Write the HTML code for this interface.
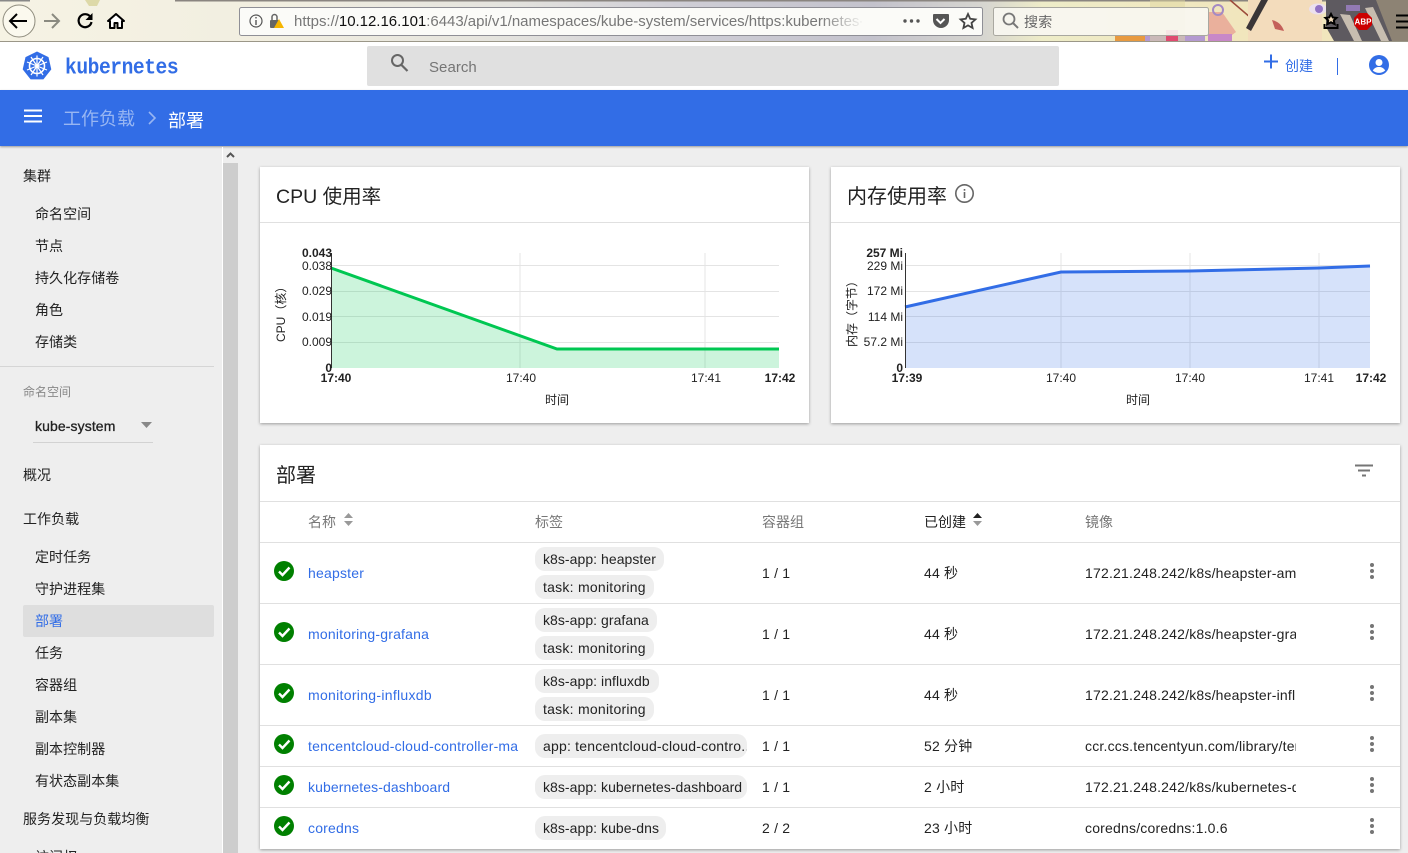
<!DOCTYPE html>
<html><head><meta charset="utf-8">
<style>
html,body{margin:0;padding:0;width:1408px;height:853px;overflow:hidden;background:#eeeeee;font-family:"Liberation Sans","Noto Sans CJK SC",sans-serif;font-size:14px;color:#222}
#root{position:relative;width:1408px;height:853px;overflow:hidden;letter-spacing:.2px}
.a{position:absolute;white-space:nowrap}
.t{position:absolute;white-space:nowrap;line-height:20px}
.card{position:absolute;background:#fff;box-shadow:0 1px 3px rgba(0,0,0,.35)}
.hl{position:absolute;height:1px;background:#e0e0e0}
.chip{position:absolute;background:#eee;border-radius:10px;height:24px;line-height:24px;padding:0 8px;color:#222;white-space:nowrap;overflow:hidden;box-sizing:border-box;letter-spacing:.05px}
.task{letter-spacing:.25px}
.lnk{color:#326de6}
.side{color:#222;letter-spacing:.05px}
.th{color:#777}
</style></head><body><div id="root">

<!-- browser chrome -->
<svg class="a" style="left:0;top:0" width="1408" height="42" viewBox="0 0 1408 42">
<defs><linearGradient id="bg" x1="0" x2="1" y1="0" y2="0">
<stop offset="0" stop-color="#f6f3e4"/><stop offset=".2" stop-color="#f1eee0"/><stop offset=".36" stop-color="#e4e3de"/><stop offset=".48" stop-color="#cfced6"/><stop offset=".62" stop-color="#c3c2cc"/><stop offset=".7" stop-color="#d7d6d0"/><stop offset=".74" stop-color="#eeecc8"/><stop offset=".88" stop-color="#f1e6bd"/><stop offset="1" stop-color="#f1e6bd"/></linearGradient></defs>
<rect width="1408" height="41" fill="url(#bg)"/>
<rect width="30" height="1.500" fill="#888"/><rect x="175" width="1233" height="1.500" fill="#8a8580"/>
<path d="M85 0h15l-3 6h-8z" fill="#ddd9a8"/>
<!-- centre-right art behind search box -->
<rect x="1130" y="36" width="75" height="5" fill="#b49ad0"/>
<rect x="1150" y="0" width="35" height="41" fill="#e0d8a0" opacity=".5"/>
<rect x="1166" y="30" width="12" height="11" fill="#e04a70"/>
<rect x="1115" y="36" width="30" height="5" fill="#e89a40"/>
<!-- flower/red at 1210-1240 -->
<path d="M1208 12h14l14 20-12 9h-16z" fill="#eab09c"/>
<circle cx="1218" cy="10" r="5" fill="none" stroke="#a48ac4" stroke-width="2"/>
<rect x="1208" y="34" width="24" height="7" fill="#c888c8"/>
<path d="M1230 0l28 24" stroke="#9c4a3a" stroke-width="1.500"/>
<!-- face and hair -->
<path d="M1248 0h74v41h-74z" fill="#f3dcbc"/>
<path d="M1268 0h-7l-15 28 5 3z" fill="#3a3638"/>
<path d="M1272 20q9 2 12 11l-9-2z" fill="#c4605a"/>
<ellipse cx="1318" cy="9" rx="9" ry="5.500" fill="#ece0ee"/><circle cx="1319" cy="9" r="4" fill="#9272c4"/>
<path d="M1326 0h82v41h-74l-8-14z" fill="#5e5a60"/>
<path d="M1340 14l14 27h8l-12-26zM1365 8l16 33h8l-16-34z" fill="#c7bdb0"/>
<path d="M1376 0h32v41h-16z" fill="#8d8374"/>
<rect x="1346" y="5" width="14" height="6" fill="#a888d8" opacity=".7"/>
<rect y="41" width="1408" height="1" fill="#9b9788"/>
<rect x="239.500" y="7.500" width="743" height="28" rx="2" fill="#fbfbf8" stroke="#8f8f96"/>
<rect x="993.500" y="7.500" width="215" height="28" rx="2" fill="#f8f7f2" fill-opacity=".9" stroke="#a9a8a0"/>
<circle cx="19" cy="21" r="16" fill="#fbf9ee" stroke="#8e8b7d"/>
<path d="M27 21H11M17 14l-7 7 7 7" fill="none" stroke="#000" stroke-width="2"/>
<path d="M59 21H44M52 14l7 7-7 7" fill="none" stroke="#8a8a80" stroke-width="2"/>
<path d="M90.500 17a6.500 6.500 0 1 0 1 5" fill="none" stroke="#000" stroke-width="2.200"/><path d="M92.500 13v7h-7z" fill="#000"/>
<path d="M116 14l-8 7h2v7h4.500v-5h3v5h4.500v-7h2z" fill="#fff" stroke="#000" stroke-width="2" stroke-linejoin="round"/>
<circle cx="256" cy="21" r="6" fill="none" stroke="#555" stroke-width="1.200"/><rect x="255.300" y="20" width="1.400" height="5" fill="#555"/><rect x="255.300" y="17" width="1.400" height="1.500" fill="#555"/>
<rect x="270" y="20" width="9" height="8" rx="1" fill="#666"/><path d="M272 20v-3a2.500 2.500 0 0 1 5 0v3" fill="none" stroke="#666" stroke-width="1.500"/>
<path d="M279 19l-5 9h10z" fill="#f6b500"/>
<circle cx="905" cy="21" r="1.700" fill="#555"/><circle cx="911.500" cy="21" r="1.700" fill="#555"/><circle cx="918" cy="21" r="1.700" fill="#555"/>
<path d="M933 14h15a1 1 0 0 1 1 1v5a8 8 0 0 1-16 0v-5a1 1 0 0 1 1-1z" fill="#555"/><path d="M936.500 19l4 4 4-4" fill="none" stroke="#fff" stroke-width="2"/>
<path d="M968 14l2.200 4.800 5.200.6-3.900 3.500 1.100 5.100-4.600-2.600-4.600 2.600 1.100-5.100-3.900-3.500 5.200-.6z" fill="none" stroke="#444" stroke-width="1.800"/>
<circle cx="1009" cy="19" r="5.500" fill="none" stroke="#777" stroke-width="1.800"/><path d="M1013 23l5 5" stroke="#777" stroke-width="2"/>
<path d="M1331 14l1.800 3.500 3.700.4-2.700 2.500.8 3.700-3.600-1.800-3.600 1.800.8-3.700-2.700-2.500 3.700-.4z" fill="#f3dcbc" stroke="#000" stroke-width="2"/><path d="M1324.500 24v4h13v-4" fill="none" stroke="#000" stroke-width="2"/>
<path d="M1359 13h8l5 5v7l-5 5h-8l-5-5v-7z" fill="#c00"/>
<text x="1363" y="24.500" font-family="Liberation Sans" font-size="8" font-weight="700" fill="#fff" text-anchor="middle" letter-spacing="0">ABP</text>
<path d="M1396 15.500h12M1396 21.500h12M1396 27.500h12" stroke="#000" stroke-width="2"/>
</svg>
<div class="t" style="left:294px;top:12px;width:568px;overflow:hidden;font-size:15px;letter-spacing:-.02px;color:#777">https://<span style="color:#111">10.12.16.101</span>:6443/api/v1/namespaces/kube-system/services/https:kubernetes-</div>
<div class="a" style="left:820px;top:9px;width:50px;height:25px;background:linear-gradient(90deg,rgba(251,251,248,0),#fbfbf8 90%)"></div>
<div class="t" style="left:1024px;top:12px;color:#666">搜索</div>

<!-- header -->
<div class="a" style="left:0;top:42px;width:1408px;height:48px;background:#fff"></div>
<svg class="a" style="left:21px;top:50px" width="32" height="32" viewBox="0 0 32 32">
<path d="M16 1.500l11.500 5.600 2.800 12.300-7.900 10H9.600l-7.900-10L4.500 7.100z" fill="#326de6"/>
<circle cx="16" cy="16" r="7.500" fill="none" stroke="#fff" stroke-width="1.600"/><circle cx="16" cy="16" r="1.800" fill="#fff"/>
<path d="M16 5.500v21M6 12l20 8M26 12L6 20M10 25l12-18M22 25L10 7" stroke="#fff" stroke-width="1.200"/>
</svg>
<div class="t" style="left:65px;top:59px;font-family:'Liberation Mono','Noto Sans CJK SC',monospace;font-weight:700;font-size:20.500px;color:#326de6;letter-spacing:-.45px;transform:scale(.955,1.1);transform-origin:left center">kubernetes</div>
<div class="a" style="left:367px;top:46px;width:692px;height:40px;background:#e0e0e0;border-radius:2px"></div>
<svg class="a" style="left:388px;top:52px" width="22" height="22" viewBox="0 0 22 22"><circle cx="9.500" cy="8.500" r="5.500" fill="none" stroke="#666" stroke-width="2"/><path d="M13.500 13l6 6" stroke="#666" stroke-width="2.200"/></svg>
<div class="t" style="left:429px;top:58px;font-size:15px;color:#757575;letter-spacing:.05px">Search</div>
<svg class="a" style="left:1262px;top:53px" width="18" height="18"><path d="M9 1.500v14M2 8.500h14" stroke="#326de6" stroke-width="2"/></svg>
<div class="t" style="left:1285px;top:56px;color:#326de6;letter-spacing:0">创建</div>
<div class="a" style="left:1337px;top:58px;width:1px;height:17px;background:#326de6"></div>
<svg class="a" style="left:1368px;top:54px" width="22" height="22" viewBox="0 0 22 22"><circle cx="11" cy="11" r="10" fill="#326de6"/><circle cx="11" cy="8.500" r="3.500" fill="#fff"/><path d="M4.800 16.500c1.500-2.600 3.800-3.500 6.200-3.500s4.700.9 6.200 3.500c-3.200 3.200-9.200 3.200-12.400 0z" fill="#fff"/></svg>

<!-- blue bar -->
<div class="a" style="left:0;top:90px;width:1408px;height:56px;background:#326de6;box-shadow:0 1px 2px rgba(0,0,0,.35)"></div>
<svg class="a" style="left:24px;top:109px" width="20" height="14"><path d="M0 1.500h18M0 7h18M0 12.500h18" stroke="#fff" stroke-width="2"/></svg>
<div class="t" style="left:63px;top:109px;font-size:18px;letter-spacing:0;color:#98b6f2">工作负载</div>
<svg class="a" style="left:146px;top:110px" width="12" height="16"><path d="M3 2l6 6-6 6" fill="none" stroke="#98b6f2" stroke-width="1.600"/></svg>
<div class="t" style="left:168px;top:111px;font-size:18px;letter-spacing:0;color:#fff">部署</div>

<!-- sidebar -->
<div class="a" style="left:222px;top:147px;width:1px;height:706px;background:#fff"></div>
<div class="a" style="left:223px;top:163px;width:15px;height:690px;background:#cdcdcd"></div>
<svg class="a" style="left:225px;top:151px" width="11" height="9"><path d="M2 6l3.500-3.500L9 6" fill="none" stroke="#555" stroke-width="2"/></svg>
<div class="a" style="left:23px;top:605px;width:191px;height:32px;background:#dedede;border-radius:2px"></div>
<div class="a" style="left:0;top:366px;width:214px;height:1px;background:#d5d5d5"></div>
<div class="a" style="left:33px;top:442px;width:120px;height:1px;background:#d2d2d2"></div>
<svg class="a" style="left:141px;top:422px" width="11" height="7"><path d="M0 0h11L5.500 6z" fill="#888"/></svg>
<div class="t side" style="left:23px;top:166px">集群</div>
<div class="t side" style="left:35px;top:204px">命名空间</div>
<div class="t side" style="left:35px;top:236px">节点</div>
<div class="t side" style="left:35px;top:268px">持久化存储卷</div>
<div class="t side" style="left:35px;top:300px">角色</div>
<div class="t side" style="left:35px;top:332px">存储类</div>
<div class="t" style="left:23px;top:382px;font-size:12px;letter-spacing:0;color:#888">命名空间</div>
<div class="t side" style="left:35px;top:416px;-webkit-text-stroke:.3px #222;letter-spacing:.1px">kube-system</div>
<div class="t side" style="left:23px;top:465px">概况</div>
<div class="t side" style="left:23px;top:509px">工作负载</div>
<div class="t side" style="left:35px;top:547px">定时任务</div>
<div class="t side" style="left:35px;top:579px">守护进程集</div>
<div class="t" style="left:35px;top:611px;color:#326de6;letter-spacing:0">部署</div>
<div class="t side" style="left:35px;top:643px">任务</div>
<div class="t side" style="left:35px;top:675px">容器组</div>
<div class="t side" style="left:35px;top:707px">副本集</div>
<div class="t side" style="left:35px;top:739px">副本控制器</div>
<div class="t side" style="left:35px;top:771px">有状态副本集</div>
<div class="t side" style="left:23px;top:809px;letter-spacing:.05px">服务发现与负载均衡</div>
<div class="t side" style="left:35px;top:847px">访问权</div>

<!-- CPU card -->
<div class="card" style="left:260px;top:167px;width:549px;height:256px"></div>
<div class="hl" style="left:260px;top:222px;width:549px"></div>
<div class="t" style="left:276px;top:187px;font-size:19.500px;letter-spacing:0;color:#222">CPU 使用率</div>
<svg class="a" style="left:260px;top:230px;letter-spacing:0" width="549" height="190" viewBox="260 230 549 190" font-family="Liberation Sans,Noto Sans CJK SC,sans-serif" font-size="12" fill="#222">
<g stroke="#e4e4e4"><path d="M331 265.500H779M331 291.500H779M331 316.500H779M331 342.500H779M520 253V368M705 253V368" fill="none"/></g>
<path d="M331 268L557 349H779V368H331z" fill="#00c752" fill-opacity=".2"/>
<path d="M331 268L557 349H779" fill="none" stroke="#00c752" stroke-width="3"/>
<path d="M331.500 253V368" stroke="#333"/>
<g text-anchor="end"><text x="332" y="257" font-weight="700">0.043</text><text x="332" y="270">0.038</text><text x="332" y="295">0.029</text><text x="332" y="321">0.019</text><text x="332" y="346">0.009</text><text x="332" y="372" font-weight="700">0</text></g>
<g text-anchor="middle"><text x="336" y="382" font-weight="700">17:40</text><text x="521" y="382">17:40</text><text x="706" y="382">17:41</text><text x="780" y="382" font-weight="700">17:42</text><text x="557" y="404">时间</text></g>
<text transform="translate(285 342) rotate(-90)">CPU（核）</text>
</svg>

<!-- Memory card -->
<div class="card" style="left:831px;top:167px;width:569px;height:256px"></div>
<div class="hl" style="left:831px;top:222px;width:569px"></div>
<div class="t" style="left:847px;top:187px;font-size:20px;letter-spacing:0;color:#222">内存使用率</div>
<svg class="a" style="left:954px;top:183px" width="21" height="21"><circle cx="10.500" cy="10.500" r="8.700" fill="none" stroke="#666" stroke-width="1.600"/><rect x="9.700" y="9" width="1.600" height="6" fill="#666"/><rect x="9.700" y="6" width="1.600" height="1.700" fill="#666"/></svg>
<svg class="a" style="left:831px;top:230px;letter-spacing:0" width="569" height="190" viewBox="831 230 569 190" font-family="Liberation Sans,Noto Sans CJK SC,sans-serif" font-size="12" fill="#222">
<g stroke="#e4e4e4"><path d="M905 265.500H1370M905 291.500H1370M905 316.500H1370M905 342.500H1370M1061 253V368M1190 253V368M1319 253V368" fill="none"/></g>
<path d="M905 307L1061 272L1190 271L1319 268L1370 266V368H905z" fill="#326de6" fill-opacity=".2"/>
<path d="M905 307L1061 272L1190 271L1319 268L1370 266" fill="none" stroke="#326de6" stroke-width="3"/>
<path d="M905.500 253V368" stroke="#333"/>
<g text-anchor="end"><text x="903" y="257" font-weight="700">257 Mi</text><text x="903" y="270">229 Mi</text><text x="903" y="295">172 Mi</text><text x="903" y="321">114 Mi</text><text x="903" y="346">57.2 Mi</text><text x="903" y="372" font-weight="700">0</text></g>
<g text-anchor="middle"><text x="907" y="382" font-weight="700">17:39</text><text x="1061" y="382">17:40</text><text x="1190" y="382">17:40</text><text x="1319" y="382">17:41</text><text x="1371" y="382" font-weight="700">17:42</text><text x="1138" y="404">时间</text></g>
<text transform="translate(856 347) rotate(-90)">内存（字节）</text>
</svg>

<!-- Table card -->
<div class="card" style="left:260px;top:445px;width:1140px;height:404px"></div>
<div class="t" style="left:276px;top:466px;font-size:20px;letter-spacing:0;color:#222">部署</div>
<svg class="a" style="left:1354px;top:464px" width="20" height="14"><path d="M1 1.500h18M4 6.500h12M8 11.500h4" stroke="#757575" stroke-width="2"/></svg>
<div class="hl" style="left:260px;top:501px;width:1140px"></div>
<div class="hl" style="left:260px;top:542px;width:1140px"></div>
<div class="hl" style="left:260px;top:603px;width:1140px"></div>
<div class="hl" style="left:260px;top:664px;width:1140px"></div>
<div class="hl" style="left:260px;top:725px;width:1140px"></div>
<div class="hl" style="left:260px;top:766px;width:1140px"></div>
<div class="hl" style="left:260px;top:807px;width:1140px"></div>

<div class="t th" style="left:308px;top:512px;letter-spacing:0">名称</div>
<svg class="a" style="left:343px;top:513px" width="11" height="14"><path d="M5.500 0l4.500 5H1z" fill="#999"/><path d="M1 8h9l-4.500 5z" fill="#999"/></svg>
<div class="t th" style="left:535px;top:512px;letter-spacing:0">标签</div>
<div class="t th" style="left:762px;top:512px;letter-spacing:0">容器组</div>
<div class="t" style="left:924px;top:512px;color:#222;letter-spacing:0">已创建</div>
<svg class="a" style="left:972px;top:513px" width="11" height="14"><path d="M5.500 0l4.500 5H1z" fill="#222"/><path d="M1 8h9l-4.500 5z" fill="#999"/></svg>
<div class="t th" style="left:1085px;top:512px;letter-spacing:0">镜像</div>

<svg class="a" style="left:0;top:0;pointer-events:none" width="1408" height="853">
<defs><g id="ok"><circle r="10" fill="#008000"/><path d="M-5 .5l3.500 3.500L5.500-3.500" fill="none" stroke="#fff" stroke-width="2.400"/></g>
<g id="dots" fill="#757575"><circle cy="-6" r="2"/><circle r="2"/><circle cy="6" r="2"/></g></defs>
<use href="#ok" x="284" y="571"/><use href="#ok" x="284" y="632"/><use href="#ok" x="284" y="693"/><use href="#ok" x="284" y="744"/><use href="#ok" x="284" y="785"/><use href="#ok" x="284" y="826"/>
<use href="#dots" x="1372" y="571"/><use href="#dots" x="1372" y="632"/><use href="#dots" x="1372" y="693"/><use href="#dots" x="1372" y="744"/><use href="#dots" x="1372" y="785"/><use href="#dots" x="1372" y="826"/>
</svg>

<!-- rows -->
<div class="t lnk" style="left:308px;top:563px">heapster</div>
<div class="chip" style="left:535px;top:547px;width:129px">k8s-app: heapster</div>
<div class="chip task" style="left:535px;top:575px;width:119px">task: monitoring</div>
<div class="t" style="left:762px;top:563px">1 / 1</div>
<div class="t" style="left:924px;top:563px">44 秒</div>
<div class="t" style="left:1085px;top:563px;width:211px;overflow:hidden">172.21.248.242/k8s/heapster-amd64:v1.5.4</div>

<div class="t lnk" style="left:308px;top:624px">monitoring-grafana</div>
<div class="chip" style="left:535px;top:608px;width:122px">k8s-app: grafana</div>
<div class="chip task" style="left:535px;top:636px;width:119px">task: monitoring</div>
<div class="t" style="left:762px;top:624px">1 / 1</div>
<div class="t" style="left:924px;top:624px">44 秒</div>
<div class="t" style="left:1085px;top:624px;width:211px;overflow:hidden">172.21.248.242/k8s/heapster-grafana-amd64</div>

<div class="t lnk" style="left:308px;top:685px;letter-spacing:.3px">monitoring-influxdb</div>
<div class="chip" style="left:535px;top:669px;width:124px">k8s-app: influxdb</div>
<div class="chip task" style="left:535px;top:697px;width:119px">task: monitoring</div>
<div class="t" style="left:762px;top:685px">1 / 1</div>
<div class="t" style="left:924px;top:685px">44 秒</div>
<div class="t" style="left:1085px;top:685px;width:211px;overflow:hidden">172.21.248.242/k8s/heapster-influxdb-amd64</div>

<div class="t lnk" style="left:308px;top:736px;width:211px;overflow:hidden">tencentcloud-cloud-controller-manager</div>
<div class="chip" style="left:535px;top:734px;width:212px;letter-spacing:.2px">app: tencentcloud-cloud-contro..</div>
<div class="t" style="left:762px;top:736px">1 / 1</div>
<div class="t" style="left:924px;top:736px">52 分钟</div>
<div class="t" style="left:1085px;top:736px;width:211px;overflow:hidden">ccr.ccs.tencentyun.com/library/tencentcloud</div>

<div class="t lnk" style="left:308px;top:777px;letter-spacing:.1px">kubernetes-dashboard</div>
<div class="chip" style="left:535px;top:775px;width:212px">k8s-app: kubernetes-dashboard</div>
<div class="t" style="left:762px;top:777px">1 / 1</div>
<div class="t" style="left:924px;top:777px">2 小时</div>
<div class="t" style="left:1085px;top:777px;width:211px;overflow:hidden">172.21.248.242/k8s/kubernetes-dashboard</div>

<div class="t lnk" style="left:308px;top:818px">coredns</div>
<div class="chip" style="left:535px;top:816px;width:131px">k8s-app: kube-dns</div>
<div class="t" style="left:762px;top:818px">2 / 2</div>
<div class="t" style="left:924px;top:818px">23 小时</div>
<div class="t" style="left:1085px;top:818px">coredns/coredns:1.0.6</div>

</div></body></html>
